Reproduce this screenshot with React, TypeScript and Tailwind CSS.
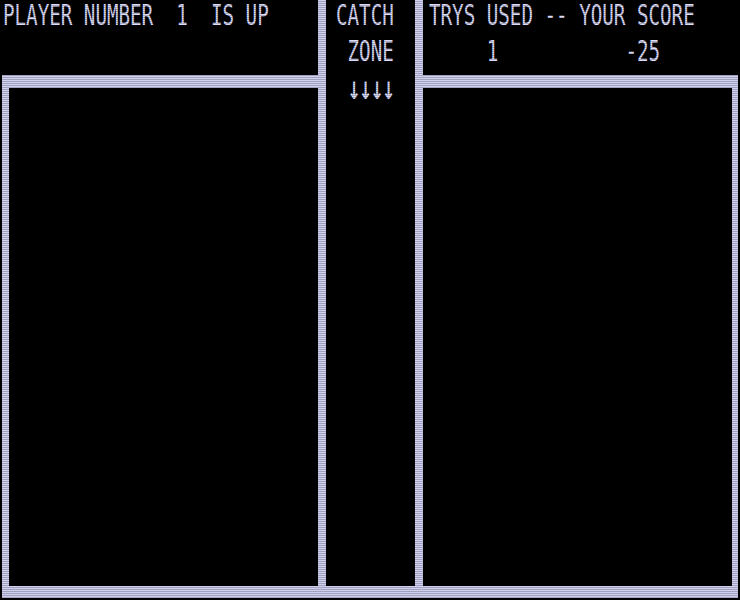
import React from "react";

// Green-screen style game board: header readouts, a catch-zone column and three wells.
const font = { fontFamily: '"DejaVu Sans Mono", "Liberation Mono", monospace' };

function Line({ children, className = "" }: { children: React.ReactNode; className?: string }) {
  return (
    <div className={"h-[22.4px] leading-[22.4px] mb-[2.8px] whitespace-pre " + className}>{children}</div>
  );
}

export default function App() {
  return (
    <div className="relative w-[740px] h-[600px] bg-black overflow-hidden text-[#dcdcfa] text-[19.2px]" style={font}>
      <div className="grid w-full h-full grid-cols-[2px_7px_309px_8px_89px_8px_309px_6px_2px] grid-rows-[75px_13px_498px_12px_2px]">
        {/* header: left */}
        <div className="col-start-1 col-end-4 row-start-1 pl-[3px]">
          <div className="origin-top scale-y-[1.45]">
            <Line>PLAYER NUMBER  1  IS UP</Line>
          </div>
        </div>

        {/* dividers around the catch zone */}
        <div className="col-start-4 row-start-1 row-end-4 bg-[#d0d0f2]" />
        <div className="col-start-6 row-start-1 row-end-4 bg-[#d0d0f2]" />

        {/* catch zone label */}
        <div className="col-start-5 row-start-1 row-end-4 pl-[10px]">
          <div className="origin-top scale-y-[1.45]">
            <Line>CATCH</Line>
            <Line> ZONE</Line>
            <Line className="pl-[11px] pt-[1px]">
              <span
                className="text-[16.5px] font-bold tracking-[-2.3px]"
                style={{ fontFamily: '"DejaVu Sans", sans-serif' }}
              >
                ↓↓↓↓
              </span>
            </Line>
          </div>
        </div>

        {/* header: right */}
        <div className="col-start-7 col-end-10 row-start-1 pl-[6px]">
          <div className="origin-top scale-y-[1.45]">
            <Line>TRYS USED -- YOUR SCORE</Line>
            <Line>     1           -25</Line>
          </div>
        </div>

        {/* well frames */}
        <div className="col-start-2 col-end-4 row-start-2 bg-[#d0d0f2]" />
        <div className="col-start-7 col-end-9 row-start-2 bg-[#d0d0f2]" />
        <div className="col-start-2 row-start-2 row-end-5 bg-[#d0d0f2]" />
        <div className="col-start-8 row-start-2 row-end-5 bg-[#d0d0f2]" />
        <div className="col-start-2 col-end-9 row-start-4 bg-[#d0d0f2]" />
      </div>

      {/* CRT scanlines */}
      <div className="pointer-events-none absolute inset-0 bg-[repeating-linear-gradient(to_bottom,transparent_0px,transparent_1px,rgba(0,0,0,0.22)_1px,rgba(0,0,0,0.22)_2px)]" />
    </div>
  );
}
